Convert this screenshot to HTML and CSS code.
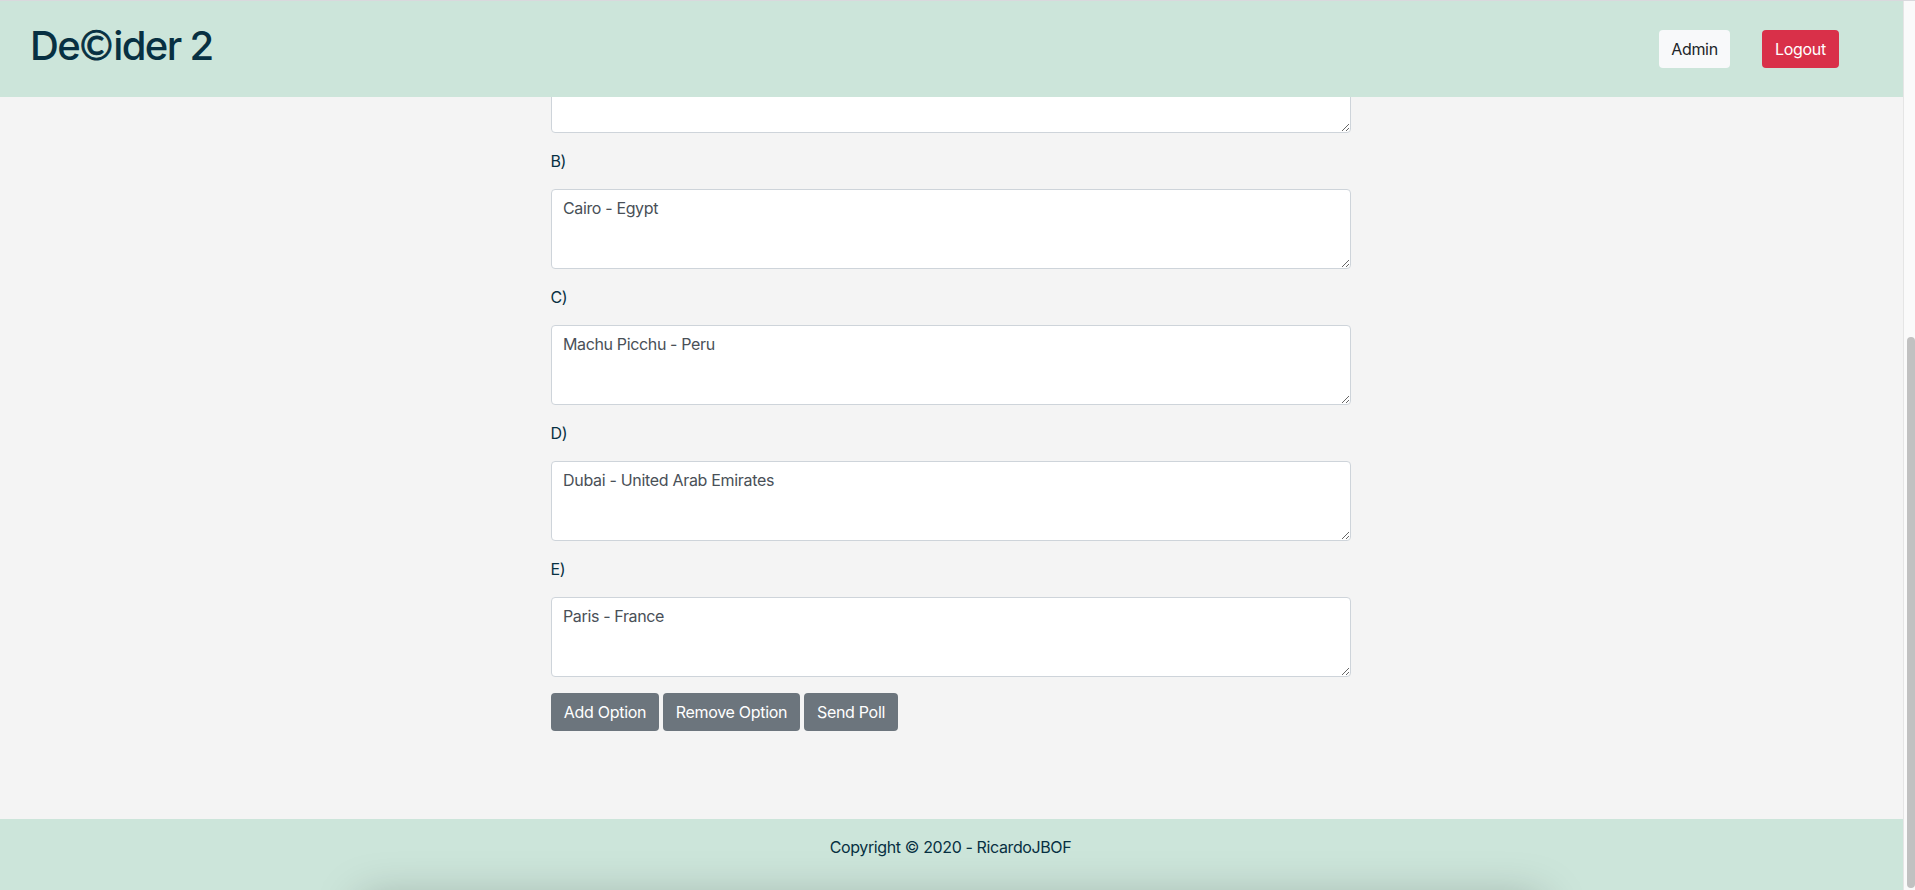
FILE: index.html
```html
<!DOCTYPE html>
<html lang="en">
<head>
<meta charset="utf-8">
<title>De©ider 2</title>
<link rel="stylesheet" href="styles.css">
</head>
<body>
<div class="page">
  <header class="header">
    <h1 class="brand">De<span class="mark">©</span>ider 2</h1>
    <nav class="nav">
      <button class="btn btn-light">Admin</button>
      <button class="btn btn-danger">Logout</button>
    </nav>
  </header>
  <main class="main">
    <form class="poll">
      <textarea class="field" rows="2"></textarea>
      <label class="label">B)</label>
      <textarea class="field" rows="2">Cairo - Egypt</textarea>
      <label class="label">C)</label>
      <textarea class="field" rows="2">Machu Picchu - Peru</textarea>
      <label class="label">D)</label>
      <textarea class="field field-wide" rows="2">Dubai - United Arab Emirates</textarea>
      <label class="label">E)</label>
      <textarea class="field" rows="2">Paris - France</textarea>
      <div class="actions">
        <button type="button" class="btn btn-secondary add">Add Option</button>
        <button type="button" class="btn btn-secondary remove">Remove Option</button>
        <button type="button" class="btn btn-secondary send">Send Poll</button>
      </div>
    </form>
  </main>
  <footer class="footer"><p class="copyright">Copyright © 2020 - RicardoJBOF</p></footer>
</div>
<div class="scrollbar"><div class="thumb"></div></div>
</body>
</html>
```
FILE: styles.css
```css
* { box-sizing: border-box; }

body {
  margin: 0;
  height: 890px;
  display: flex;
  overflow: hidden;
  border-top: 1px solid #d9d9dd;
  background: #f4f4f4;
  color: #073042;
  font: 16px/24px Inter, "Liberation Sans", sans-serif;
  letter-spacing: -0.36px;
}

.page {
  flex: 1;
  display: flex;
  flex-direction: column;
}

.header {
  height: 96px;
  flex: none;
  display: flex;
  justify-content: space-between;
  align-items: flex-start;
  padding: 21px 64px 0 30px;
  background: #cce5da;
}

.brand {
  margin: 0;
  font-size: 40px;
  line-height: 48px;
  font-weight: 500;
  letter-spacing: -1.6px;
}

.mark {
  display: inline-block;
  width: 34px;
  padding-left: 0.5px;
  font-family: Lato, sans-serif;
  font-size: 40px;
  font-weight: 400;
  line-height: 1;
  letter-spacing: 0;
  -webkit-text-stroke: 0.9px #073042;
}

.nav {
  display: flex;
  gap: 32px;
  padding-top: 8px;
}

.btn {
  height: 38px;
  padding: 0;
  border: 0;
  border-radius: 4px;
  font: inherit;
  letter-spacing: -0.3px;
  color: #fff;
}

.btn-light { width: 71px; background: #f8f9fa; color: #212529; }
.btn-danger { width: 77px; background: #d93049; }
.btn-secondary { background: #6c757d; }
.add { width: 108px; }
.remove { width: 137px; }
.send { width: 94px; }

.main {
  flex: 1;
  min-height: 0;
  display: flex;
  flex-direction: column;
  justify-content: flex-end;
  align-items: center;
  overflow: hidden;
  padding: 0 1px 88px 0;
}

.poll {
  width: 800px;
  display: flex;
  flex-direction: column;
}

.field {
  display: block;
  width: 100%;
  height: 80px;
  flex: none;
  margin: 0;
  padding: 6px 11px;
  border: 1px solid #ced4da;
  border-radius: 4px;
  background: #fff;
  color: #495057;
  font: inherit;
  letter-spacing: inherit;
  resize: vertical;
}

.field-wide { letter-spacing: -0.31px; }

.label { margin: 16px 0; text-indent: -0.5px; }

.actions {
  display: flex;
  gap: 4px;
  margin-top: 16px;
}

.footer {
  position: relative;
  height: 71px;
  flex: none;
  overflow: hidden;
  padding-top: 16px;
  background: #cce5da;
  text-align: center;
}

.footer::after {
  content: "";
  position: absolute;
  top: 80px;
  left: 361px;
  right: 361px;
  height: 60px;
  box-shadow: 0 0 46px rgba(0, 0, 0, 0.25);
}

.copyright { margin: 0 2px 0 0; letter-spacing: -0.38px; }

.scrollbar {
  width: 12px;
  flex: none;
  padding: 336px 0 2px 3px;
  border-left: 1px solid #e5e5e5;
  background: #fafafa;
}

.thumb {
  width: 8px;
  height: 100%;
  border-radius: 4px;
  background: #c1c1c1;
}
```
